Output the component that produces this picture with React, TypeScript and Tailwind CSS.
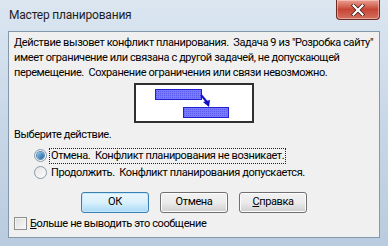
import React from "react";

function Diagram() {
  return (
    <div className="mx-auto mt-[3px] h-[40px] w-[120px] border-2 border-[#303030] bg-white">
      <svg width="116" height="36" viewBox="0 0 116 36">
        <defs>
          <pattern id="dots" width="2" height="2" patternUnits="userSpaceOnUse">
            <rect width="2" height="2" fill="#7a7aff" />
            <rect width="1" height="1" fill="#5a5af0" />
          </pattern>
        </defs>
        <rect x="19.5" y="4.5" width="46" height="10" fill="url(#dots)" stroke="#2020d0" />
        <rect x="47.5" y="22.5" width="45" height="10" fill="url(#dots)" stroke="#2020d0" />
        <path d="M65 10 L71 17" stroke="#1010c0" strokeWidth="2" />
        <path d="M67 17 L74 15 L73 22 Z" fill="#1010c0" />
      </svg>
    </div>
  );
}

function Radio({ checked, label, focused }: { checked?: boolean; label: string; focused?: boolean }) {
  return (
    <div className="flex h-[17px] items-center">
      <div className="flex h-[13px] w-[13px] items-center justify-center rounded-full border border-[#8c9aab] bg-gradient-to-br from-[#e6e6e6] to-[#fbfbfb]">
        {checked && (
          <div className="h-[7px] w-[7px] rounded-full bg-gradient-to-br from-[#8ecdf3] to-[#1a5d95] shadow-[0_0_0_1px_#5e8dbb]" />
        )}
      </div>
      <span
        className={`ml-[3px] whitespace-pre px-[1px] leading-[14px] ${
          focused ? "outline outline-1 outline-dotted outline-[#222]" : ""
        }`}
      >
        {label}
      </span>
    </div>
  );
}

function Btn({ children, primary }: { children: React.ReactNode; primary?: boolean }) {
  return (
    <button
      className={`flex h-[21px] w-[68px] items-center justify-center rounded-[3px] border text-[11px] text-black ${
        primary
          ? "border-[#3c7fb1] bg-gradient-to-b from-[#eaf6fd] via-[#d9f0fc] to-[#a7d9f5] shadow-[inset_0_0_0_1px_#c6e8fa]"
          : "border-[#707070] bg-gradient-to-b from-[#f2f2f2] via-[#ebebeb] to-[#cfcfcf] shadow-[inset_0_0_0_1px_#fcfcfc]"
      }`}
    >
      {children}
    </button>
  );
}

export default function App() {
  return (
    <div
      className="relative flex h-[246px] w-[388px] flex-col overflow-hidden bg-gradient-to-b from-[#dbe6f1] via-[#c8d7e7] to-[#b9cbde] px-[8px] pb-[8px] text-[11px] tracking-[-0.4px] text-black"
      style={{ fontFamily: 'Roboto, "Liberation Sans", sans-serif' }}
    >
      {/* title bar */}
      <div className="flex h-[31px] shrink-0 items-center pl-[1px] pb-[2px] text-[12px] tracking-[-0.2px] text-[#1e1e1e]">
        Мастер планирования
      </div>
      <div className="absolute right-[8px] top-0 flex h-[20px] w-[44px] items-center justify-center rounded-b-[4px] border border-t-0 border-[#6b2a22] bg-gradient-to-b from-[#e8a093] via-[#c74535] to-[#d2705f] shadow-[inset_0_0_0_1px_rgba(255,220,210,0.5)]">
        <svg width="14" height="12" viewBox="0 0 14 12">
          <path d="M2.5 1.5 L11.5 10.5 M11.5 1.5 L2.5 10.5" stroke="#3a1510" strokeWidth="3.6" strokeLinecap="square" />
          <path d="M2.5 1.5 L11.5 10.5 M11.5 1.5 L2.5 10.5" stroke="#ffffff" strokeWidth="2.2" strokeLinecap="square" />
        </svg>
      </div>

      {/* client area */}
      <div className="flex flex-1 flex-col border border-[#8397ad] bg-[#f0f0f0] px-[5px] pt-[3px]">
        <p className="whitespace-pre leading-[15px]">
          {'Действие вызовет конфликт планирования.  Задача 9 из "Розробка сайту"\nимеет ограничение или связана с другой задачей, не допускающей\nперемещение.  Сохранение ограничения или связи невозможно.'}
        </p>
        <Diagram />
        <p className="mt-[4px] leading-[15px]">Выберите действие.</p>
        <div className="ml-[20px] mt-[5px] flex flex-col gap-0">
          <Radio checked focused label="Отмена.  Конфликт планирования не возникает." />
          <Radio label="Продолжить.  Конфликт планирования допускается." />
        </div>
        <div className="mt-[11px] flex justify-center gap-[11px]">
          <Btn primary>ОК</Btn>
          <Btn>Отмена</Btn>
          <Btn>
            <span>
              <span className="underline">С</span>правка
            </span>
          </Btn>
        </div>
        <div className="mt-[3px] flex items-center">
          <div className="h-[13px] w-[13px] border border-[#8e8f8f] bg-gradient-to-br from-[#dcdcdc] to-[#fafafa] shadow-[inset_0_0_0_1px_#f4f4f4]" />
          <span className="ml-[3px] leading-[15px]">
            <span className="underline">Б</span>ольше не выводить это сообщение
          </span>
        </div>
      </div>
    </div>
  );
}
